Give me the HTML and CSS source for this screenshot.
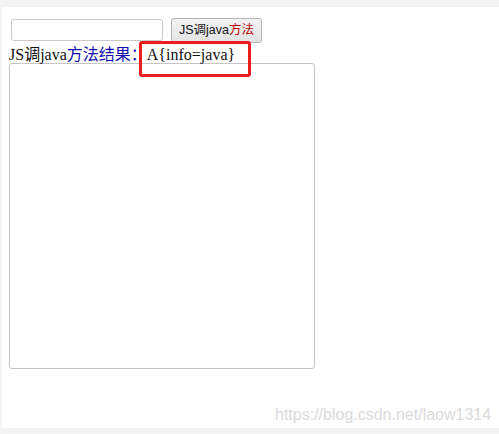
FILE: index.html
```html
<!DOCTYPE html>
<html lang="zh-CN">
<head>
<meta charset="utf-8">
<title>JS调java方法</title>
<link rel="stylesheet" href="styles.css">
</head>
<body>
<div class="panel">
  <div class="row">
    <input class="field" type="text">
    <button class="btn" type="button"><span class="dark">JS调java</span><span class="red">方法</span></button>
  </div>
  <div class="result">
    <span class="dark">JS调java</span><span class="blue">方法结果：</span><span class="value">A{info=java}</span>
    <span class="mark"></span>
  </div>
  <textarea class="area"></textarea>
  <div class="watermark">https://blog.csdn.net/laow1314</div>
</div>
</body>
</html>
```
FILE: styles.css
```css
html, body {
  margin: 0;
  padding: 0;
  background: #f3f3f3;
}
.panel {
  position: relative;
  box-sizing: border-box;
  margin: 7px 0 0 2px;
  height: 421px;
  background: #ffffff;
  padding: 11px 0 0 7px;
}
.row {
  display: flex;
  align-items: flex-start;
  height: 27px;
}
.field {
  box-sizing: border-box;
  margin: 1px 0 0 2px;
  width: 152px;
  height: 22px;
  border: 1px solid #c9c9c9;
  border-radius: 3px;
  background: #fff;
  padding: 0 3px;
  outline: none;
}
.btn {
  box-sizing: border-box;
  margin: 0 0 0 8px;
  width: 91px;
  height: 25px;
  padding: 0;
  border: 1px solid #b4b4b4;
  border-radius: 3px;
  background: linear-gradient(#f4f4f4, #e3e3e3);
  font-family: "Liberation Sans", "Noto Sans CJK SC", sans-serif;
  font-size: 12.5px;
  color: #111;
  line-height: 23px;
}
.btn .red {
  color: #b80000;
}
.result {
  position: relative;
  height: 18px;
  line-height: 18px;
  padding-top: 1px;
  margin-bottom: -1px;
  font-family: "Liberation Serif", "Noto Sans CJK SC", serif;
  font-size: 16px;
  color: #111;
  white-space: nowrap;
}
.result .dark {
  color: #111;
}
.result .blue {
  color: #1010b0;
}
.result .value {
  color: #111;
}
.mark {
  position: absolute;
  left: 130px;
  top: -4px;
  width: 112px;
  height: 36px;
  box-sizing: border-box;
  border: 3px solid #ee1d1d;
  border-radius: 3px;
}
.area {
  display: block;
  box-sizing: border-box;
  margin: 0;
  width: 306px;
  height: 306px;
  border: 1px solid #c4c4c4;
  border-radius: 3px;
  resize: none;
  background: #fff;
  outline: none;
}
.watermark {
  position: absolute;
  left: 273px;
  top: 399px;
  font-family: "Liberation Sans", sans-serif;
  font-size: 16px;
  color: #dadada;
  white-space: nowrap;
}
```
